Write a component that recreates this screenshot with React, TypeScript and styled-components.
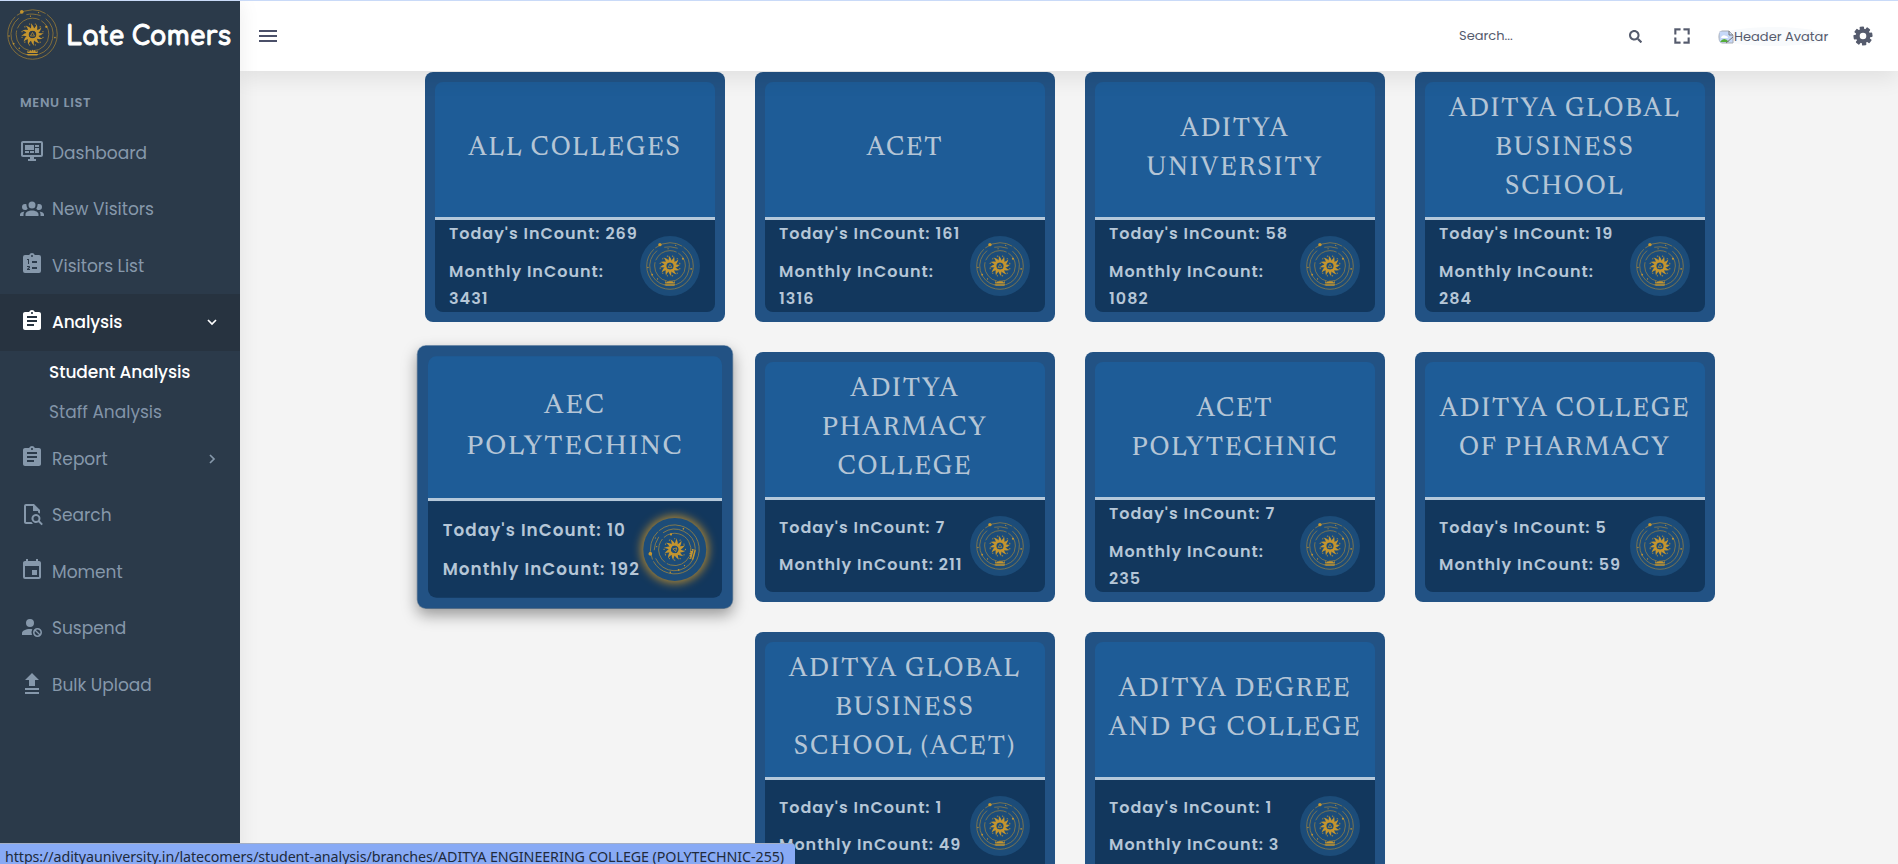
import React from "react";
import styled, { createGlobalStyle, css } from "styled-components";
import { MdAssignment, MdEvent } from "react-icons/md";
import { FaSearch } from "react-icons/fa";
import { BiFullscreen } from "react-icons/bi";

const Global = createGlobalStyle`
  * { box-sizing: border-box; }
  html, body { margin: 0; height: 864px; overflow: hidden; }
  body { background: #f4f4f4; font-family: Poppins, Inter, "Open Sans", sans-serif; }
  p, h2 { margin: 0; }
`;

const Page = styled.div`
  position: relative;
  display: flex;
  height: 864px;
  overflow: hidden;
  border-top: 1px solid #c9daf8;
`;

const Sidebar = styled.aside`
  width: 240px;
  flex: none;
  background: #2b3a4a;
  z-index: 2;
  box-shadow: 0 2px 20px rgba(0, 0, 0, 0.08);
`;

const Brand = styled.div`
  height: 70px;
  display: flex;
  align-items: center;
  gap: 8px;
  padding: 0 0 3px 7px;
`;

const MenuTitle = styled.div`
  padding: 22px 20px 0;
  height: 53.5px;
  color: #8294a8;
  font-size: 13px;
  line-height: 19px;
  font-weight: 600;
  letter-spacing: 0.65px;
`;

const MenuItem = styled.div<{ $active?: boolean }>`
  height: 56.5px;
  display: flex;
  align-items: center;
  padding: 0 20px;
  color: ${(p) => (p.$active ? "#fff" : "#8698ab")};
  background: ${(p) => (p.$active ? "#273340" : "transparent")};
  > svg:first-child { flex: none; margin: -3px 8px 0 0; }
`;

const Label = styled.span<{ $bold?: boolean }>`
  font-size: 17px;
  line-height: 24px;
  font-weight: ${(p) => (p.$bold ? 500 : 400)};
  letter-spacing: ${(p) => (p.$bold ? "-0.15px" : "0")};
  white-space: nowrap;
`;

const Arrow = styled.svg`
  margin-left: auto;
`;

const SubMenu = styled.div`
  height: 80px;
  padding: 1px 0 0 49px;
`;

const SubItem = styled.div<{ $active?: boolean }>`
  height: 40px;
  font-size: 17px;
  line-height: 40px;
  font-weight: ${(p) => (p.$active ? 500 : 400)};
  letter-spacing: ${(p) => (p.$active ? "-0.1px" : "0")};
  color: ${(p) => (p.$active ? "#fff" : "#8294a8")};
`;

const Main = styled.div`
  flex: 1;
  display: flex;
  flex-direction: column;
  min-width: 0;
`;

const TopBar = styled.header`
  height: 70px;
  flex: none;
  display: flex;
  align-items: center;
  background: #fff;
  box-shadow: 0 8px 20px rgba(0, 0, 0, 0.08);
  z-index: 1;
  padding: 0 25px 0 18px;
  color: #555b6d;
  position: relative;
`;

const SearchBox = styled.div`
  margin-left: auto;
  width: 183px;
  display: flex;
  align-items: center;
  justify-content: space-between;
  font-size: 13px;
`;

const FullscreenIcon = styled(BiFullscreen)`
  margin-left: 30px;
  stroke: currentColor;
  stroke-width: 0.5;
`;

const Avatar = styled.div`
  width: 110px;
  height: 19px;
  margin: 1px 25px 0 26px;
  border-radius: 50%;
  background: #f8fafc;
  display: flex;
  align-items: center;
  white-space: nowrap;
  font-size: 13px;
  svg { flex: none; border-radius: 8px 0 0 8px; }
`;

const Grid = styled.section`
  display: grid;
  grid-template-columns: repeat(4, 300px);
  gap: 30px;
  padding: 1px 0 0 185px;
`;

const Card = styled.article<{ $hover?: boolean; $col?: number }>`
  height: 250px;
  padding: 10px;
  border-radius: 8px;
  background: #225284;
  ${(p) => p.$col && css`grid-column: ${p.$col};`}
  ${(p) =>
    p.$hover &&
    css`
      transform: scale(1.05);
      box-shadow: 0 6px 14px rgba(0, 0, 0, 0.38), 0 0 0 0.7px #91a9c1;
    `}
`;

const Head = styled.div`
  height: 135px;
  display: flex;
  align-items: center;
  justify-content: center;
  border-radius: 8px 8px 0 0;
  background: #1e5c97;
`;

const Title = styled.h2`
  color: #b4c5d6;
  font-family: Newsreader, "Crimson Text", "Liberation Serif", serif;
  font-optical-sizing: none;
  font-size: 26px;
  line-height: 39px;
  font-weight: 500;
  letter-spacing: 2px;
  text-align: center;
`;

const TitleLine = styled.span`
  display: block;
  white-space: nowrap;
`;

const Foot = styled.div`
  height: 95px;
  border-top: 3px solid #b4c8da;
  border-radius: 0 0 8px 8px;
  background: #12375d;
  display: flex;
  align-items: center;
  justify-content: space-between;
  padding: 0 15px 0 14px;
`;

const Counts = styled.div`
  display: flex;
  flex-direction: column;
  gap: 10.5px;
  color: #b5c6d7;
  font-size: 16px;
  line-height: 27px;
  font-weight: 600;
  letter-spacing: 1px;
  white-space: nowrap;
`;

const Badge = styled.div<{ $glow?: boolean }>`
  width: 60px;
  height: 60px;
  margin-left: -10px;
  flex: none;
  border-radius: 50%;
  background: #1c4c79;
  display: flex;
  align-items: center;
  justify-content: center;
  ${(p) =>
    p.$glow &&
    css`
      box-shadow: 0 0 9px 2px #b38932;
      svg { transform: rotate(-75deg); }
    `}
`;

const StatusUrl = styled.div`
  position: absolute;
  z-index: 3;
  left: 0;
  bottom: 0;
  width: 795px;
  height: 21px;
  padding-left: 5px;
  border-radius: 0 4px 0 0;
  background: #88aaf5;
  border-top: 1px solid #a4afc6;
  color: #202a3c;
  font-family: "Segoe UI", "Noto Sans", sans-serif;
  font-size: 14.3px;
  line-height: 25px;
  letter-spacing: -0.09px;
  white-space: nowrap;
`;

const rays = Array.from({ length: 12 }, (_, i) => i * 30);

const Emblem = ({ size }: { size: number }) => (
  <svg width={size} height={size} viewBox="0 0 100 100" fill="none" stroke="#c4952f">
    <g strokeWidth="1.5" opacity=".75">
      <circle cx="50" cy="50" r="48.5" strokeDasharray="190 4 60 3" />
      <path d="M23 18A41 41 0 0 0 40 90M62 89A41 41 0 0 0 76 19M38 11Q50 8 66 13" />
      <circle cx="50" cy="50" r="32" strokeDasharray="52 4" />
    </g>
    <g fill="#c4952f" stroke="none">
      {rays.map((r) => (
        <g key={r} transform={`rotate(${r} 50 50)`}>
          <path d="M44.5 41.5Q49 37 47 28Q54.5 36 53 42Z" />
          <circle cx="55.5" cy="29.5" r="1.2" />
        </g>
      ))}
      <circle cx="29" cy="5.5" r="3.6" />
      <circle cx="77" cy="35" r="2.2" />
      <circle cx="13" cy="68" r="1.8" />
      <circle cx="94" cy="56" r="1.6" />
      <circle cx="4" cy="53" r="1.4" />
      <circle cx="62" cy="7" r="1.2" />
      <circle cx="46" cy="14" r="1.2" />
      <circle cx="24" cy="77" r="1.3" />
      <path d="M38 88h24l-3 3H41zM40 86.5v-5l3 3 3-4 2 3 2-4 2 4 2-3 3 4 3-3v5z" />
    </g>
    <circle cx="50" cy="50" r="9" strokeWidth="3" />
    <path d="M50 46l4 7h-8z" strokeWidth="1.4" />
  </svg>
);

const Wordmark = () => (
  <svg width="168" height="40" viewBox="0 0 168 40">
    <text
      x="0"
      y="30"
      fill="#fff"
      stroke="#fff"
      strokeWidth="0.9"
      fontFamily="Comfortaa, Righteous, sans-serif"
      fontSize="26.5"
      fontWeight="700"
      textLength="165"
      lengthAdjust="spacingAndGlyphs"
    >
      Late Comers
    </text>
  </svg>
);

const glyphs = {
  dashboard:
    "M21,16V4H3V16H21M21,2A2,2 0 0,1 23,4V16A2,2 0 0,1 21,18H14V20H16V22H8V20H10V18H3C1.89,18 1,17.1 1,16V4C1,2.89 1.89,2 3,2H21M5,6H14V11H5V6M15,6H19V8H15V6M19,9V14H15V9H19M5,12H9V14H5V12M10,12H14V14H10V12Z",
  group:
    "M12,5.5A3.5,3.5 0 0,1 15.5,9A3.5,3.5 0 0,1 12,12.5A3.5,3.5 0 0,1 8.5,9A3.5,3.5 0 0,1 12,5.5M5,8C5.56,8 6.08,8.15 6.53,8.42C6.38,9.85 6.8,11.27 7.66,12.38C7.16,13.34 6.16,14 5,14A3,3 0 0,1 2,11A3,3 0 0,1 5,8M19,8A3,3 0 0,1 22,11A3,3 0 0,1 19,14C17.84,14 16.84,13.34 16.34,12.38C17.2,11.27 17.62,9.85 17.47,8.42C17.92,8.15 18.44,8 19,8M5.5,18.25C5.5,16.18 8.41,14.5 12,14.5C15.59,14.5 18.5,16.18 18.5,18.25V20H5.5V18.25M0,20V18.5C0,17.11 1.89,15.94 4.45,15.6C3.86,16.28 3.5,17.22 3.5,18.25V20H0M24,20H20.5V18.25C20.5,17.22 20.14,16.28 19.55,15.6C22.11,15.94 24,17.11 24,18.5V20Z",
  fileSearch:
    "M6 2a2 2 0 0 0-2 2v16c0 1.1.9 2 2 2h7a6 6 0 0 1-1.5-2H6V4h7v5h5v1.6a6 6 0 0 1 2 1.2V8l-6-6H6M16 12a4.5 4.5 0 1 0 2.4 8.3l3.1 3 1.4-1.4-3.1-3.1A4.5 4.5 0 0 0 16 12m0 2a2.5 2.5 0 1 1 0 5 2.5 2.5 0 0 1 0-5z",
  suspend:
    "M10 4a4 4 0 1 1 0 8 4 4 0 0 1 0-8M10 14c.8 0 1.6.1 2.3.2a6.5 6.5 0 0 0-.3 5.8H2v-2c0-2.2 3.6-4 8-4M17.5 13a4.5 4.5 0 1 1 0 9 4.5 4.5 0 0 1 0-9m0 1.5c-.6 0-1.1.2-1.6.5l4.1 4.1a3 3 0 0 0-2.5-4.6m-2.5 1.4a3 3 0 0 0 4.1 4.1z",
  upload: "M9 15V9H5l7-7 7 7h-4v6H9M5 17h14v2H5v-2M5 21h14v2H5z",
  orderedList:
    "M19 3h-4.2a3 3 0 0 0-5.6 0H5a2 2 0 0 0-2 2v14a2 2 0 0 0 2 2h14a2 2 0 0 0 2-2V5a2 2 0 0 0-2-2m-7 0a1 1 0 1 1 0 2 1 1 0 0 1 0-2M7 7h2v5H8V8H7V7m3 8.2c0 .5-.3.8-.7 1.1L8.6 17H10v1H7v-1l2-2H7v-1h2.2c.5 0 .8.4.8.8zM12 9h5v2h-5V9m0 6h5v2h-5z",
};

const Glyph = ({ d }: { d: string }) => (
  <svg width="24" height="24" viewBox="0 0 24 24" fill="currentColor" fillRule="evenodd">
    <path d={d} />
  </svg>
);

const gearTeeth = Array.from({ length: 8 }, (_, i) => i * 45 - 8);

const Gear = () => (
  <svg width="20" height="20" viewBox="-10 -10 20 20" fill="currentColor">
    {gearTeeth.map((r) => (
      <rect key={r} x="-2.2" y="-9.5" width="4.4" height="5" rx=".8" transform={`rotate(${r})`} />
    ))}
    <circle r="5.3" fill="none" stroke="currentColor" strokeWidth="4" />
  </svg>
);

const BrokenImage = () => (
  <svg width="16" height="16" viewBox="0 0 16 16">
    <path d="M1 2h10l4 4v8H1z" fill="#c6d8f8" stroke="#a8adb5" />
    <path d="M3 9a3 3 0 0 1 5-2 2 2 0 0 1 2 2z" fill="#fff" />
    <path d="M2 13q4-6 9 0z" fill="#55ad3a" />
    <path d="M11 2v4h4M8 14l7-6" fill="none" stroke="#777" />
  </svg>
);

type CardData = { lines: string[]; today: number; month: string[]; hover?: boolean; col?: number };

const cards: CardData[] = [
  { lines: ["ALL COLLEGES"], today: 269, month: ["Monthly InCount:", "3431"] },
  { lines: ["ACET"], today: 161, month: ["Monthly InCount:", "1316"] },
  { lines: ["ADITYA", "UNIVERSITY"], today: 58, month: ["Monthly InCount:", "1082"] },
  { lines: ["ADITYA GLOBAL", "BUSINESS", "SCHOOL"], today: 19, month: ["Monthly InCount:", "284"] },
  { lines: ["AEC", "POLYTECHINC"], today: 10, month: ["Monthly InCount: 192"], hover: true },
  { lines: ["ADITYA", "PHARMACY", "COLLEGE"], today: 7, month: ["Monthly InCount: 211"] },
  { lines: ["ACET", "POLYTECHNIC"], today: 7, month: ["Monthly InCount:", "235"] },
  { lines: ["ADITYA COLLEGE", "OF PHARMACY"], today: 5, month: ["Monthly InCount: 59"] },
  { lines: ["ADITYA GLOBAL", "BUSINESS", "SCHOOL (ACET)"], today: 1, month: ["Monthly InCount: 49"], col: 2 },
  { lines: ["ADITYA DEGREE", "AND PG COLLEGE"], today: 1, month: ["Monthly InCount: 3"] },
];

const Chevron = ({ down }: { down?: boolean }) => (
  <Arrow width="16" height="16" viewBox="0 0 16 16" fill="none" stroke="currentColor" strokeWidth="1.7">
    <path d={down ? "M4 6l4 4 4-4" : "M6 4l4 4-4 4"} />
  </Arrow>
);

export default function App() {
  return (
    <Page>
      <Global />
      <Sidebar>
        <Brand>
          <Emblem size={51} />
          <Wordmark />
        </Brand>
        <MenuTitle>MENU LIST</MenuTitle>
        <MenuItem><Glyph d={glyphs.dashboard} /><Label>Dashboard</Label></MenuItem>
        <MenuItem><Glyph d={glyphs.group} /><Label>New Visitors</Label></MenuItem>
        <MenuItem><Glyph d={glyphs.orderedList} /><Label>Visitors List</Label></MenuItem>
        <MenuItem $active><MdAssignment size={24} /><Label $bold>Analysis</Label><Chevron down /></MenuItem>
        <SubMenu>
          <SubItem $active>Student Analysis</SubItem>
          <SubItem>Staff Analysis</SubItem>
        </SubMenu>
        <MenuItem><MdAssignment size={24} /><Label>Report</Label><Chevron /></MenuItem>
        <MenuItem><Glyph d={glyphs.fileSearch} /><Label>Search</Label></MenuItem>
        <MenuItem><MdEvent size={24} /><Label>Moment</Label></MenuItem>
        <MenuItem><Glyph d={glyphs.suspend} /><Label>Suspend</Label></MenuItem>
        <MenuItem><Glyph d={glyphs.upload} /><Label>Bulk Upload</Label></MenuItem>
      </Sidebar>
      <Main>
        <TopBar>
          <svg width="20" height="14" viewBox="0 0 20 14" fill="#4b5069">
            <path d="M1 1h18v2H1zM1 6h18v2H1zM1 11h18v2H1z" />
          </svg>
          <SearchBox><span>Search...</span><FaSearch size={13} /></SearchBox>
          <FullscreenIcon size={20} />
          <Avatar><BrokenImage />Header Avatar</Avatar>
          <Gear />
        </TopBar>
        <Grid>
          {cards.map((c, i) => (
            <Card key={i} $hover={c.hover} $col={c.col}>
              <Head>
                <Title>{c.lines.map((t) => <TitleLine key={t}>{t}</TitleLine>)}</Title>
              </Head>
              <Foot>
                <Counts>
                  <p>Today's InCount: {c.today}</p>
                  <p>{c.month.map((m) => <React.Fragment key={m}>{m}<br /></React.Fragment>)}</p>
                </Counts>
                <Badge $glow={c.hover}><Emblem size={48} /></Badge>
              </Foot>
            </Card>
          ))}
        </Grid>
      </Main>
      <StatusUrl>https://adityauniversity.in/latecomers/student-analysis/branches/ADITYA ENGINEERING COLLEGE (POLYTECHNIC-255)</StatusUrl>
    </Page>
  );
}
